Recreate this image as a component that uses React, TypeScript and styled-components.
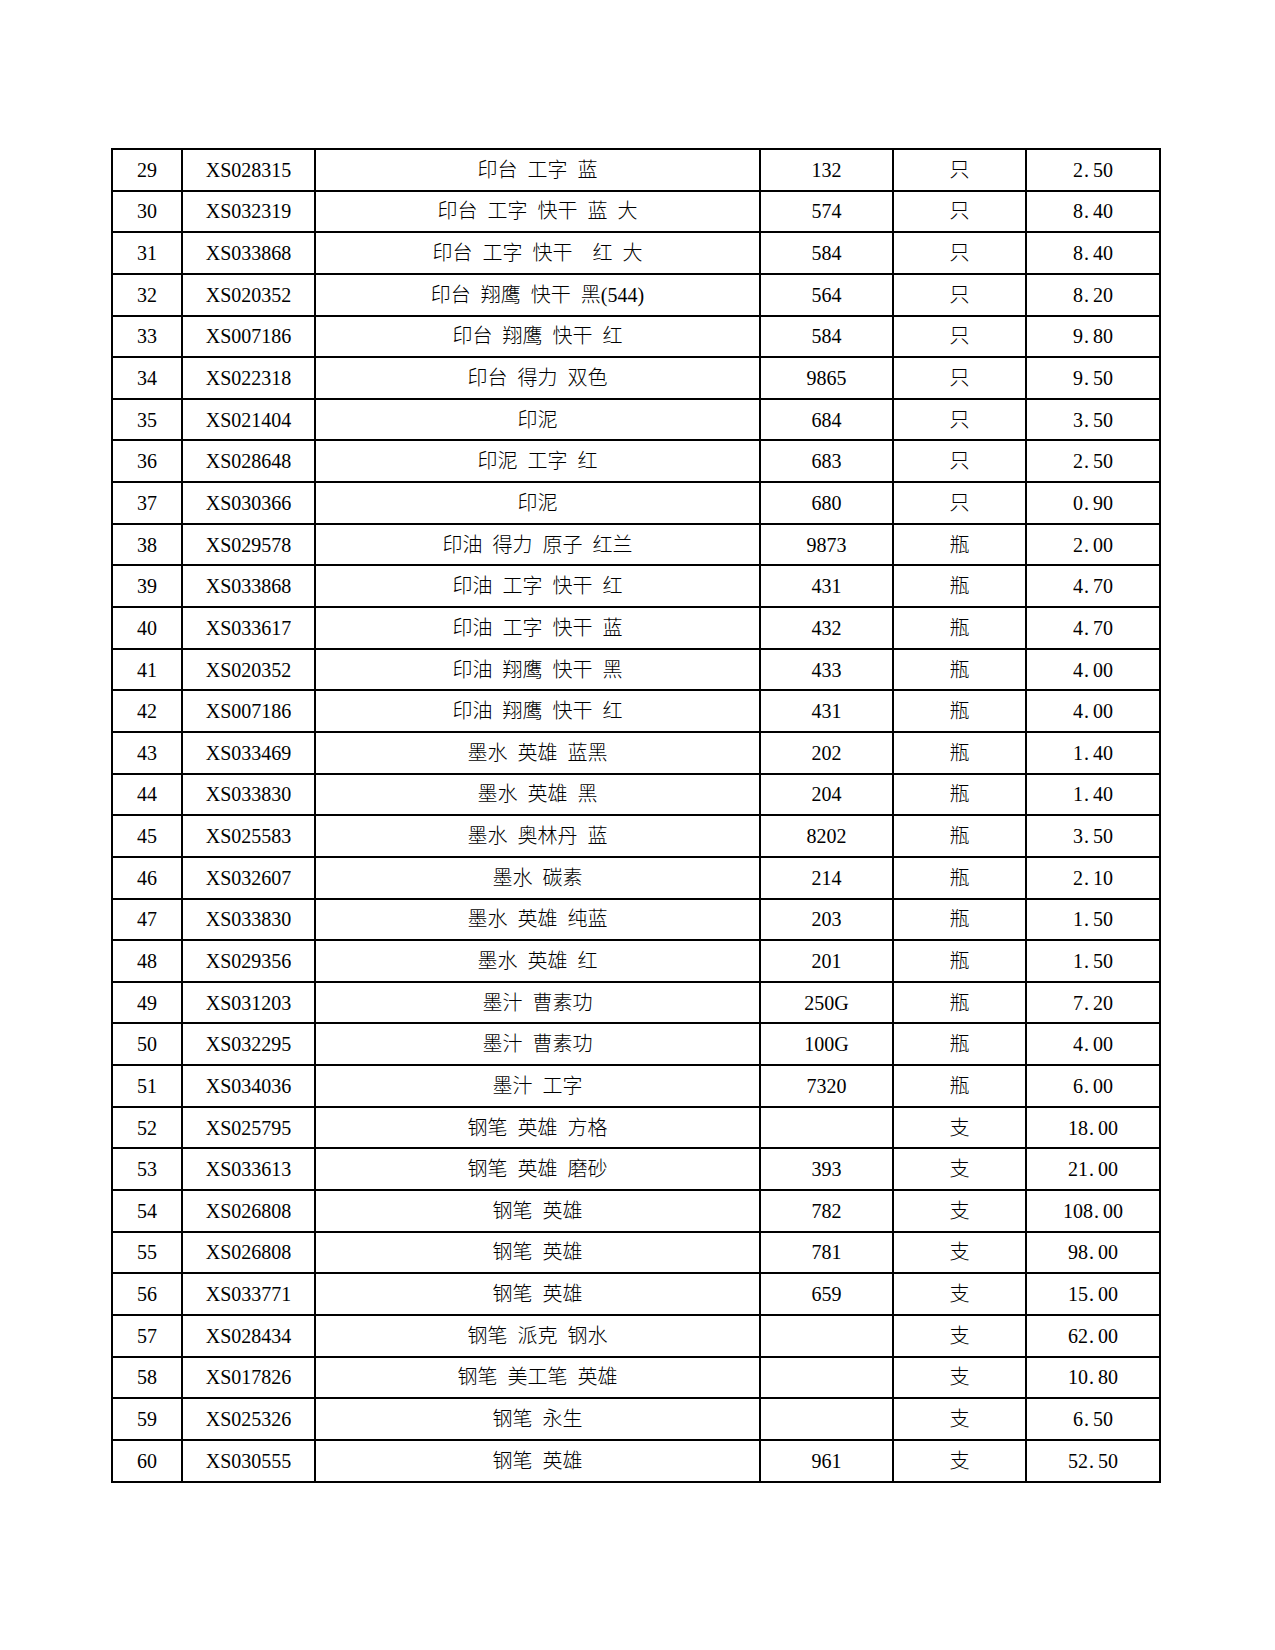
import React from "react";
import styled, { createGlobalStyle } from "styled-components";

const GlobalStyle = createGlobalStyle`
  html, body {
    margin: 0;
    padding: 0;
    background: #fff;
  }
  body {
    font-family: "Liberation Serif", "Noto Sans CJK SC", serif;
    color: #000;
  }
`;

type Item = [string, string, string, string, string, string];

const rows: Item[] = [
  ["29", "XS028315", "印台 工字 蓝", "132", "只", "2.50"],
  ["30", "XS032319", "印台 工字 快干 蓝 大", "574", "只", "8.40"],
  ["31", "XS033868", "印台 工字 快干  红 大", "584", "只", "8.40"],
  ["32", "XS020352", "印台 翔鹰 快干 黑(544)", "564", "只", "8.20"],
  ["33", "XS007186", "印台 翔鹰 快干 红", "584", "只", "9.80"],
  ["34", "XS022318", "印台 得力 双色", "9865", "只", "9.50"],
  ["35", "XS021404", "印泥", "684", "只", "3.50"],
  ["36", "XS028648", "印泥 工字 红", "683", "只", "2.50"],
  ["37", "XS030366", "印泥", "680", "只", "0.90"],
  ["38", "XS029578", "印油 得力 原子 红兰", "9873", "瓶", "2.00"],
  ["39", "XS033868", "印油 工字 快干 红", "431", "瓶", "4.70"],
  ["40", "XS033617", "印油 工字 快干 蓝", "432", "瓶", "4.70"],
  ["41", "XS020352", "印油 翔鹰 快干 黑", "433", "瓶", "4.00"],
  ["42", "XS007186", "印油 翔鹰 快干 红", "431", "瓶", "4.00"],
  ["43", "XS033469", "墨水 英雄 蓝黑", "202", "瓶", "1.40"],
  ["44", "XS033830", "墨水 英雄 黑", "204", "瓶", "1.40"],
  ["45", "XS025583", "墨水 奥林丹 蓝", "8202", "瓶", "3.50"],
  ["46", "XS032607", "墨水 碳素", "214", "瓶", "2.10"],
  ["47", "XS033830", "墨水 英雄 纯蓝", "203", "瓶", "1.50"],
  ["48", "XS029356", "墨水 英雄 红", "201", "瓶", "1.50"],
  ["49", "XS031203", "墨汁 曹素功", "250G", "瓶", "7.20"],
  ["50", "XS032295", "墨汁 曹素功", "100G", "瓶", "4.00"],
  ["51", "XS034036", "墨汁 工字", "7320", "瓶", "6.00"],
  ["52", "XS025795", "钢笔 英雄 方格", "", "支", "18.00"],
  ["53", "XS033613", "钢笔 英雄 磨砂", "393", "支", "21.00"],
  ["54", "XS026808", "钢笔 英雄", "782", "支", "108.00"],
  ["55", "XS026808", "钢笔 英雄", "781", "支", "98.00"],
  ["56", "XS033771", "钢笔 英雄", "659", "支", "15.00"],
  ["57", "XS028434", "钢笔 派克 钢水", "", "支", "62.00"],
  ["58", "XS017826", "钢笔 美工笔 英雄", "", "支", "10.80"],
  ["59", "XS025326", "钢笔 永生", "", "支", "6.50"],
  ["60", "XS030555", "钢笔 英雄", "961", "支", "52.50"],
];

const colWidths = [70, 133, 445, 133, 133, 134];

const Page = styled.div`
  width: 1275px;
  min-height: 1650px;
  box-sizing: border-box;
  padding: 148px 0 0 111px;
`;

const Sheet = styled.table`
  border-collapse: collapse;
  table-layout: fixed;
  width: 1050px;
`;

const Row = styled.tr`
  height: 41.65px;
`;

const Cell = styled.td`
  border: 2px solid #000;
  padding: 0;
  text-align: center;
  vertical-align: middle;
  font-size: 20px;
  font-weight: 300;
  line-height: 1;
  white-space: pre;
  word-spacing: 5px;
  overflow: hidden;
`;

// half-width period, as in the source sheet's font
const Dot = styled.span`
  display: inline-block;
  width: 0.5em;
  text-align: left;
  padding-left: 1px;
  box-sizing: border-box;
`;

function Price({ value }: { value: string }) {
  const [whole, frac] = value.split(".");
  return (
    <>
      {whole}
      <Dot>.</Dot>
      {frac}
    </>
  );
}

export default function App() {
  return (
    <>
      <GlobalStyle />
      <Page>
        <Sheet>
          <colgroup>
            {colWidths.map((w, i) => (
              <col key={i} style={{ width: w }} />
            ))}
          </colgroup>
          <tbody>
            {rows.map((r) => (
              <Row key={r[0]}>
                {r.map((v, i) => (
                  <Cell key={i}>{i === 5 ? <Price value={v} /> : v}</Cell>
                ))}
              </Row>
            ))}
          </tbody>
        </Sheet>
      </Page>
    </>
  );
}
